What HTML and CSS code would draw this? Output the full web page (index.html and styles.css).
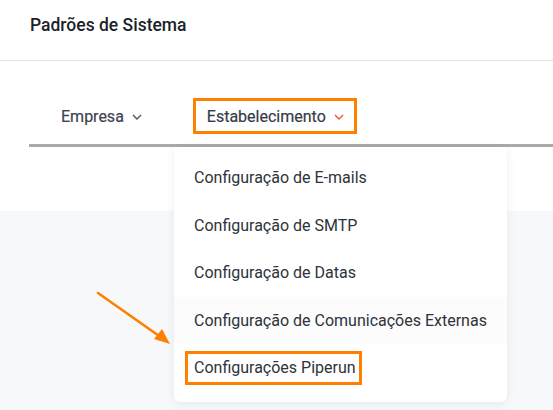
FILE: index.html
```html
<!DOCTYPE html>
<html lang="pt-BR">
<head>
<meta charset="utf-8">
<title>Padrões de Sistema</title>
<link rel="stylesheet" href="styles.css">
</head>
<body>
<div class="page">
  <header class="header">
    <h1 class="title">Padrões de Sistema</h1>
  </header>
  <section class="tabs-area">
    <nav class="tabs">
      <div class="tab">
        <span>Empresa</span>
        <svg class="chev" width="10" height="6" viewBox="0 0 10 6"><path d="M1 1l4 4 4-4" fill="none" stroke="#555" stroke-width="1.4"/></svg>
      </div>
      <div class="tab tab-active">
        <span>Estabelecimento</span>
        <svg class="chev" width="10" height="6" viewBox="0 0 10 6"><path d="M1 1l4 4 4-4" fill="none" stroke="#e9553b" stroke-width="1.4"/></svg>
      </div>
    </nav>
  </section>
  <section class="content"></section>

  <ul class="dropdown">
    <li class="item">Configuração de E-mails</li>
    <li class="item">Configuração de SMTP</li>
    <li class="item">Configuração de Datas</li>
    <li class="item item-hover">Configuração de Comunicações Externas</li>
    <li class="item"><span class="boxed">Configurações Piperun</span></li>
  </ul>

  <svg class="arrow" width="80" height="60" viewBox="0 0 80 60">
    <line x1="2" y1="2" x2="66" y2="47" stroke="#ff8000" stroke-width="2.6" stroke-linecap="round"/>
    <path d="M74 53 L58 48 L66 38 Z" fill="#ff8000"/>
  </svg>
</div>
</body>
</html>
```

FILE: styles.css
```css
* { box-sizing: border-box; }
html, body { margin: 0; padding: 0; }
body {
  font-family: Roboto, "Noto Sans", Arial, sans-serif;
  background: #f7f8fa;
  width: 553px;
  height: 410px;
  overflow: hidden;
}
.page {
  position: relative;
  width: 553px;
  height: 410px;
  display: flex;
  flex-direction: column;
}
.header {
  height: 61px;
  background: #fff;
  border-bottom: 1px solid #e2e2e2;
  display: flex;
  align-items: flex-start;
  padding: 14px 0 0 30px;
}
.title {
  margin: 0;
  font-size: 17.5px;
  font-weight: 500;
  color: #1c1f2a;
  line-height: 22px;
}
.tabs-area {
  height: 150px;
  background: #fff;
  padding: 37px 0 0 29px;
}
.tabs {
  display: flex;
  align-items: flex-end;
  border-bottom: 3px solid #aaaaaa;
  padding-left: 32px;
  padding-bottom: 10px;
}
.tab {
  display: flex;
  align-items: center;
  gap: 8px;
  font-size: 16px;
  font-weight: 400;
  color: #3e4350;
  height: 36px;
  -webkit-text-stroke: 0.2px #3e4350;
}
.tab-active {
  margin-left: 51px;
  border: 3px solid #ff8000;
  padding: 0 10px 0 11px;
  color: #353a46;
}
.chev { margin-top: 1px; }
.content { flex: 1; }
.dropdown {
  position: absolute;
  left: 174px;
  top: 147px;
  width: 333px;
  height: 255px;
  margin: 0;
  padding: 7px 0 0 0;
  list-style: none;
  background: #fff;
  border-radius: 0 0 6px 6px;
  box-shadow: 0 2px 10px rgba(0,0,0,0.07);
}
.item {
  height: 47.5px;
  display: flex;
  align-items: center;
  padding-left: 20px;
  font-size: 16px;
  color: #2f323a;
}
.item-hover { background: #fcfcfc; }
.boxed {
  margin-left: -9px;
  border: 3px solid #ff8000;
  padding: 0 3px 0 6px;
  height: 34px;
  display: flex;
  align-items: center;
}
.arrow {
  position: absolute;
  left: 96px;
  top: 291px;
}
```
